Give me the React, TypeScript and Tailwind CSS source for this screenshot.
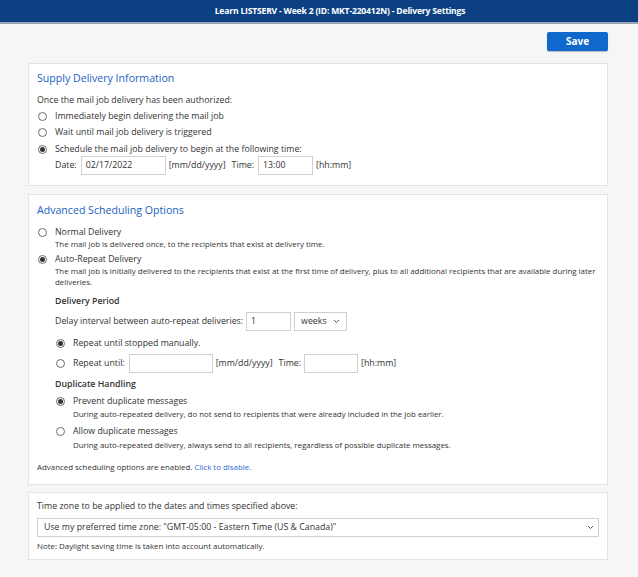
import React from "react"

const font = { fontFamily: '"Open Sans", "Liberation Sans", sans-serif' }

const Radio = ({ checked }: { checked?: boolean }) => (
  <span className="flex h-[9px] w-[9px] shrink-0 items-center justify-center rounded-full border border-[#6b6b6b] bg-white">
    {checked && <span className="h-[5px] w-[5px] rounded-full bg-[#333]" />}
  </span>
)

const Input = ({ value, className }: { value?: string; className: string }) => (
  <div className={`flex h-[19px] items-center border border-[#d0d0d0] bg-white px-[4px] text-[8.8px] text-[#333] ${className}`}>{value}</div>
)

const Chevron = () => (
  <svg width="7" height="5" viewBox="0 0 7 5" className="shrink-0">
    <path d="M1 1l2.5 2.5L6 1" fill="none" stroke="#555" strokeWidth="1" />
  </svg>
)

const Card = ({ children, className }: { children: React.ReactNode; className?: string }) => (
  <div className={`border border-[#e4e4e4] bg-white px-[8px] ${className ?? ""}`}>{children}</div>
)

export default function App() {
  return (
    <div className="min-h-[577px] w-[638px] bg-[#f6f6f6] text-[8.8px] text-[#333]" style={font}>
      <div className="flex h-[24px] items-center justify-center border-b-2 border-[#9aa5b3] bg-[#0b4183] pl-[42px]">
        <span className="text-[8.6px] font-bold tracking-[-0.2px] text-white">Learn LISTSERV - Week 2 (ID: MKT-220412N) - Delivery Settings</span>
      </div>

      <div className="px-[28px] pr-[30px]">
        <div className="flex justify-end pt-[8px]">
          <button className="h-[19px] w-[61px] rounded-[2px] bg-[#1168cc] text-[10px] font-bold text-white shadow-[0_1px_1px_rgba(0,0,0,0.25)]">
            Save
          </button>
        </div>

        {/* supply delivery */}
        <Card className="mt-[12px] pt-[7px] pb-[10px]">
          <div className="text-[10.6px] leading-[14px] text-[#1a5fc2]">Supply Delivery Information</div>
          <div className="mt-[9px] leading-[13px]">Once the mail job delivery has been authorized:</div>
          <div className="mt-[3px] flex h-[13px] items-center gap-[8px] pl-[1px]">
            <Radio />
            <span>Immediately begin delivering the mail job</span>
          </div>
          <div className="mt-[3px] flex h-[13px] items-center gap-[8px] pl-[1px]">
            <Radio />
            <span>Wait until mail job delivery is triggered</span>
          </div>
          <div className="mt-[4px] flex h-[13px] items-center gap-[8px] pl-[1px]">
            <Radio checked />
            <span>Schedule the mail job delivery to begin at the following time:</span>
          </div>
          <div className="flex items-center pl-[18px]">
            <span>Date:</span>
            <Input value="02/17/2022" className="ml-[4px] w-[85px]" />
            <span className="ml-[3px]">[mm/dd/yyyy]</span>
            <span className="ml-[6px]">Time:</span>
            <Input value="13:00" className="ml-[4px] w-[55px]" />
            <span className="ml-[3px]">[hh:mm]</span>
          </div>
        </Card>

        {/* advanced scheduling */}
        <Card className="mt-[8px] pt-[8px] pb-[11px]">
          <div className="text-[10.6px] leading-[14px] text-[#1a5fc2]">Advanced Scheduling Options</div>
          <div className="mt-[9px] flex h-[13px] items-center gap-[8px] pl-[1px]">
            <Radio />
            <span>Normal Delivery</span>
          </div>
          <div className="pl-[18px] text-[7.9px] leading-[11px]">The mail job is delivered once, to the recipients that exist at delivery time.</div>
          <div className="mt-[3px] flex h-[13px] items-center gap-[8px] pl-[1px]">
            <Radio checked />
            <span>Auto-Repeat Delivery</span>
          </div>
          <div className="pl-[18px] text-[7.9px] leading-[11px]">
            The mail job is initially delivered to the recipients that exist at the first time of delivery, plus to all additional recipients that are available during later
            deliveries.
          </div>

          <div className="pl-[18px]">
            <div className="mt-[7px] font-semibold leading-[13px]">Delivery Period</div>
            <div className="mt-[4px] flex items-center">
              <span>Delay interval between auto-repeat deliveries:</span>
              <Input value="1" className="ml-[3px] w-[45px]" />
              <div className="ml-[3px] flex h-[19px] w-[53px] items-center justify-between border border-[#d0d0d0] bg-white px-[6px]">
                <span>weeks</span>
                <Chevron />
              </div>
            </div>
            <div className="mt-[6px] flex h-[13px] items-center gap-[8px] pl-[1px]">
              <Radio checked />
              <span>Repeat until stopped manually.</span>
            </div>
            <div className="mt-[4px] flex items-center pl-[1px]">
              <Radio />
              <span className="ml-[8px]">Repeat until:</span>
              <Input className="ml-[4px] w-[84px]" />
              <span className="ml-[3px]">[mm/dd/yyyy]</span>
              <span className="ml-[6px]">Time:</span>
              <Input className="ml-[3px] w-[54px]" />
              <span className="ml-[3px]">[hh:mm]</span>
            </div>

            <div className="mt-[5px] font-semibold leading-[13px]">Duplicate Handling</div>
            <div className="mt-[4px] flex h-[13px] items-center gap-[8px] pl-[1px]">
              <Radio checked />
              <span>Prevent duplicate messages</span>
            </div>
            <div className="mt-[1px] pl-[18px] text-[7.9px] leading-[11px]">
              During auto-repeated delivery, do not send to recipients that were already included in the job earlier.
            </div>
            <div className="mt-[5px] flex h-[13px] items-center gap-[8px] pl-[1px]">
              <Radio />
              <span>Allow duplicate messages</span>
            </div>
            <div className="mt-[2px] pl-[18px] text-[7.9px] leading-[11px]">
              During auto-repeated delivery, always send to all recipients, regardless of possible duplicate messages.
            </div>
          </div>
          <div className="mt-[11px] text-[7.9px] leading-[11px]">
            Advanced scheduling options are enabled. <span className="text-[#2a6ccf]">Click to disable.</span>
          </div>
        </Card>

        {/* time zone */}
        <Card className="mt-[7px] pt-[7px] pb-[7px]">
          <div className="leading-[13px]">Time zone to be applied to the dates and times specified above:</div>
          <div className="mt-[5px] flex h-[19px] items-center justify-between border border-[#d0d0d0] bg-white pl-[6px] pr-[4px]">
            <span>Use my preferred time zone: "GMT-05:00 - Eastern Time (US &amp; Canada)"</span>
            <Chevron />
          </div>
          <div className="mt-[4px] text-[7.9px] leading-[11px]">Note: Daylight saving time is taken into account automatically.</div>
        </Card>
      </div>
    </div>
  )
}
